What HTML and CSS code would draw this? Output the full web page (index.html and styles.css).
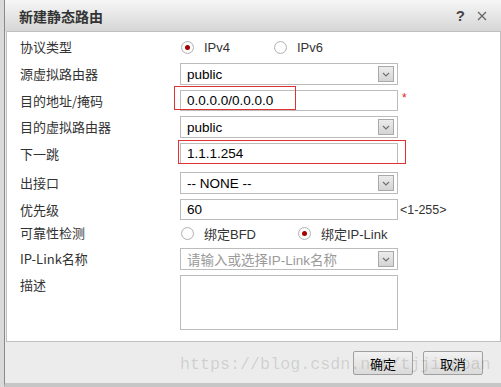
FILE: index.html
```html
<!DOCTYPE html>
<html lang="zh-CN">
  <head>
    <meta charset="UTF-8" />
    <title>新建静态路由</title>
    <link rel="stylesheet" href="styles.css">
  </head>
  <body>
    <div class="dialog">
      <div class="titlebar">
        <span class="title">新建静态路由</span>
        <span class="tools">
          <span class="help">?</span>
          <svg class="close" width="10" height="10" viewBox="0 0 10 10"><path d="M1 1 L9 9 M9 1 L1 9" stroke="#666" stroke-width="1.3" fill="none"/></svg>
        </span>
      </div>

      <div class="panel">
        <div class="row r-first">
          <span class="label">协议类型</span>
          <div class="field radios">
            <span class="opt opt-ip"><span class="radio on"></span>IPv4</span>
            <span class="opt"><span class="radio"></span>IPv6</span>
          </div>
        </div>
        <div class="row">
          <span class="label">源虚拟路由器</span>
          <div class="field select">
            <span>public</span>
            <span class="arrow"><svg width="14" height="14" viewBox="0 0 14 14"><polyline points="4,6 7,9 10,6" fill="none" stroke="#707070" stroke-width="1.2"/></svg></span>
          </div>
        </div>
        <div class="row r-input">
          <span class="label">目的地址/掩码</span>
          <div class="field input">0.0.0.0/0.0.0.0</div>
          <span class="req">*</span>
        </div>
        <div class="row">
          <span class="label">目的虚拟路由器</span>
          <div class="field select">
            <span>public</span>
            <span class="arrow"><svg width="14" height="14" viewBox="0 0 14 14"><polyline points="4,6 7,9 10,6" fill="none" stroke="#707070" stroke-width="1.2"/></svg></span>
          </div>
        </div>
        <div class="row r-input">
          <span class="label">下一跳</span>
          <div class="field input">1.1.1.254</div>
        </div>
        <div class="row r-gap">
          <span class="label">出接口</span>
          <div class="field select">
            <span>-- NONE --</span>
            <span class="arrow"><svg width="14" height="14" viewBox="0 0 14 14"><polyline points="4,6 7,9 10,6" fill="none" stroke="#707070" stroke-width="1.2"/></svg></span>
          </div>
        </div>
        <div class="row r-input">
          <span class="label">优先级</span>
          <div class="field input">60</div>
          <span class="hint">&lt;1-255&gt;</span>
        </div>
        <div class="row r-check">
          <span class="label">可靠性检测</span>
          <div class="field radios">
            <span class="opt opt-bfd"><span class="radio"></span>绑定BFD</span>
            <span class="opt"><span class="radio on"></span>绑定IP-Link</span>
          </div>
        </div>
        <div class="row r-link">
          <span class="label">IP-Link名称</span>
          <div class="field select">
            <span class="placeholder">请输入或选择IP-Link名称</span>
            <span class="arrow"><svg width="14" height="14" viewBox="0 0 14 14"><polyline points="4,6 7,9 10,6" fill="none" stroke="#707070" stroke-width="1.2"/></svg></span>
          </div>
        </div>
        <div class="row r-desc">
          <span class="label">描述</span>
          <div class="field textarea"></div>
        </div>
      </div>

      <div class="footer">
        <button class="btn">确定</button>
        <button class="btn">取消</button>
      </div>

      <div class="mark mark-dst"></div>
      <div class="mark mark-hop"></div>
      <div class="watermark">https://blog.csdn.net/tjjingpan</div>
    </div>
  </body>
</html>
```

FILE: styles.css
```css
* {
  box-sizing: border-box;
}
html,
body {
  margin: 0;
  padding: 0;
}
body {
  background: #dadada;
  font-family: "Liberation Sans", "Noto Sans CJK SC", Arial, sans-serif;
  font-size: 13px;
  color: #333;
}
.dialog {
  position: relative;
  margin-left: 4px;
  width: 497px;
  height: 387px;
  background: #ececec;
  border-left: 1px solid #8a8a8a;
  border-bottom: 4px solid #c6c6c6;
}
.titlebar {
  height: 31px;
  display: flex;
  align-items: center;
  justify-content: space-between;
  padding: 0 14px 0 14px;
  background: linear-gradient(#f6f6f6, #d6d6d6);
}
.title {
  font-family: "Noto Sans CJK SC", sans-serif;
  font-weight: bold;
  font-size: 14px;
  color: #333;
}
.tools {
  display: flex;
  align-items: center;
  gap: 12px;
}
.help {
  font-weight: bold;
  font-size: 15px;
  color: #444;
}
.close {
  margin-top: 1px;
}
.panel {
  margin-left: 1px;
  width: 495px;
  height: 311px;
  background: #fff;
  border: 1px solid #c0c0c0;
  padding: 4px 0 0 13px;
}
.row {
  display: flex;
  align-items: center;
  height: 22px;
}
.row + .row {
  margin-top: 5px;
}
.row.r-input {
  height: 21px;
}
.row.r-gap {
  margin-top: 8px;
}
.row.r-check {
  margin-top: 2px;
}
.row.r-link {
  margin-top: 4px;
}
.row.r-desc {
  height: 55px;
  align-items: flex-start;
}
.label {
  width: 160px;
  font-family: "Noto Sans CJK SC", sans-serif;
  color: #333;
  line-height: 18px;
}
.r-desc .label {
  margin-top: 1px;
}
.field {
  width: 218px;
  height: 100%;
  color: #000;
}
.input,
.select,
.textarea {
  border: 1px solid #bcbcbc;
  background: #fff;
}
.input,
.select {
  display: flex;
  align-items: center;
  padding-left: 6px;
  font-size: 13.5px;
}
.select {
  justify-content: space-between;
  padding-right: 3px;
}
.placeholder {
  color: #9a9a9a;
  font-family: "Liberation Sans", "Noto Sans CJK SC", sans-serif;
}
.arrow {
  width: 16px;
  height: 16px;
  display: flex;
  align-items: center;
  justify-content: center;
  border: 1px solid #a9a9a9;
  background: linear-gradient(#ececec, #d4d4d4);
}
.req {
  margin-left: 4px;
  color: #e02020;
  font-size: 12px;
  margin-top: -6px;
}
.hint {
  margin-left: 2px;
  color: #333;
  font-size: 12.5px;
}
.radios {
  display: flex;
  align-items: center;
  color: #333;
}
.opt {
  display: flex;
  align-items: center;
  gap: 10px;
  font-family: "Liberation Sans", "Noto Sans CJK SC", sans-serif;
}
.opt-ip {
  width: 93px;
}
.opt-bfd {
  width: 117px;
}
.radio {
  width: 13px;
  height: 13px;
  margin-left: 1px;
  border: 1px solid #b4b4b4;
  border-radius: 50%;
  background: radial-gradient(circle, #fff 55%, #e6e6e6);
  display: flex;
  align-items: center;
  justify-content: center;
}
.radio.on::after {
  content: "";
  width: 5px;
  height: 5px;
  border-radius: 50%;
  background: #a40000;
}
.footer {
  height: 41px;
  display: flex;
  justify-content: flex-end;
  align-items: flex-start;
  gap: 10px;
  padding: 9px 18px 0 0;
}
.btn {
  width: 60px;
  height: 24px;
  padding: 0;
  font-family: "Noto Sans CJK SC", sans-serif;
  font-size: 13px;
  color: #000;
  border: 1px solid #a0a0a0;
  border-radius: 2px;
  background: linear-gradient(#f2f2f2, #dadada);
}
.mark {
  position: absolute;
  border: 1px solid #e03030;
}
.mark-dst {
  left: 169px;
  top: 86px;
  width: 122px;
  height: 24px;
}
.mark-hop {
  left: 173px;
  top: 140px;
  width: 228px;
  height: 24px;
}
.watermark {
  position: absolute;
  left: 175px;
  top: 355px;
  font-family: "Liberation Mono", monospace;
  font-size: 16.7px;
  color: rgba(90, 90, 90, 0.2);
  pointer-events: none;
}
```
